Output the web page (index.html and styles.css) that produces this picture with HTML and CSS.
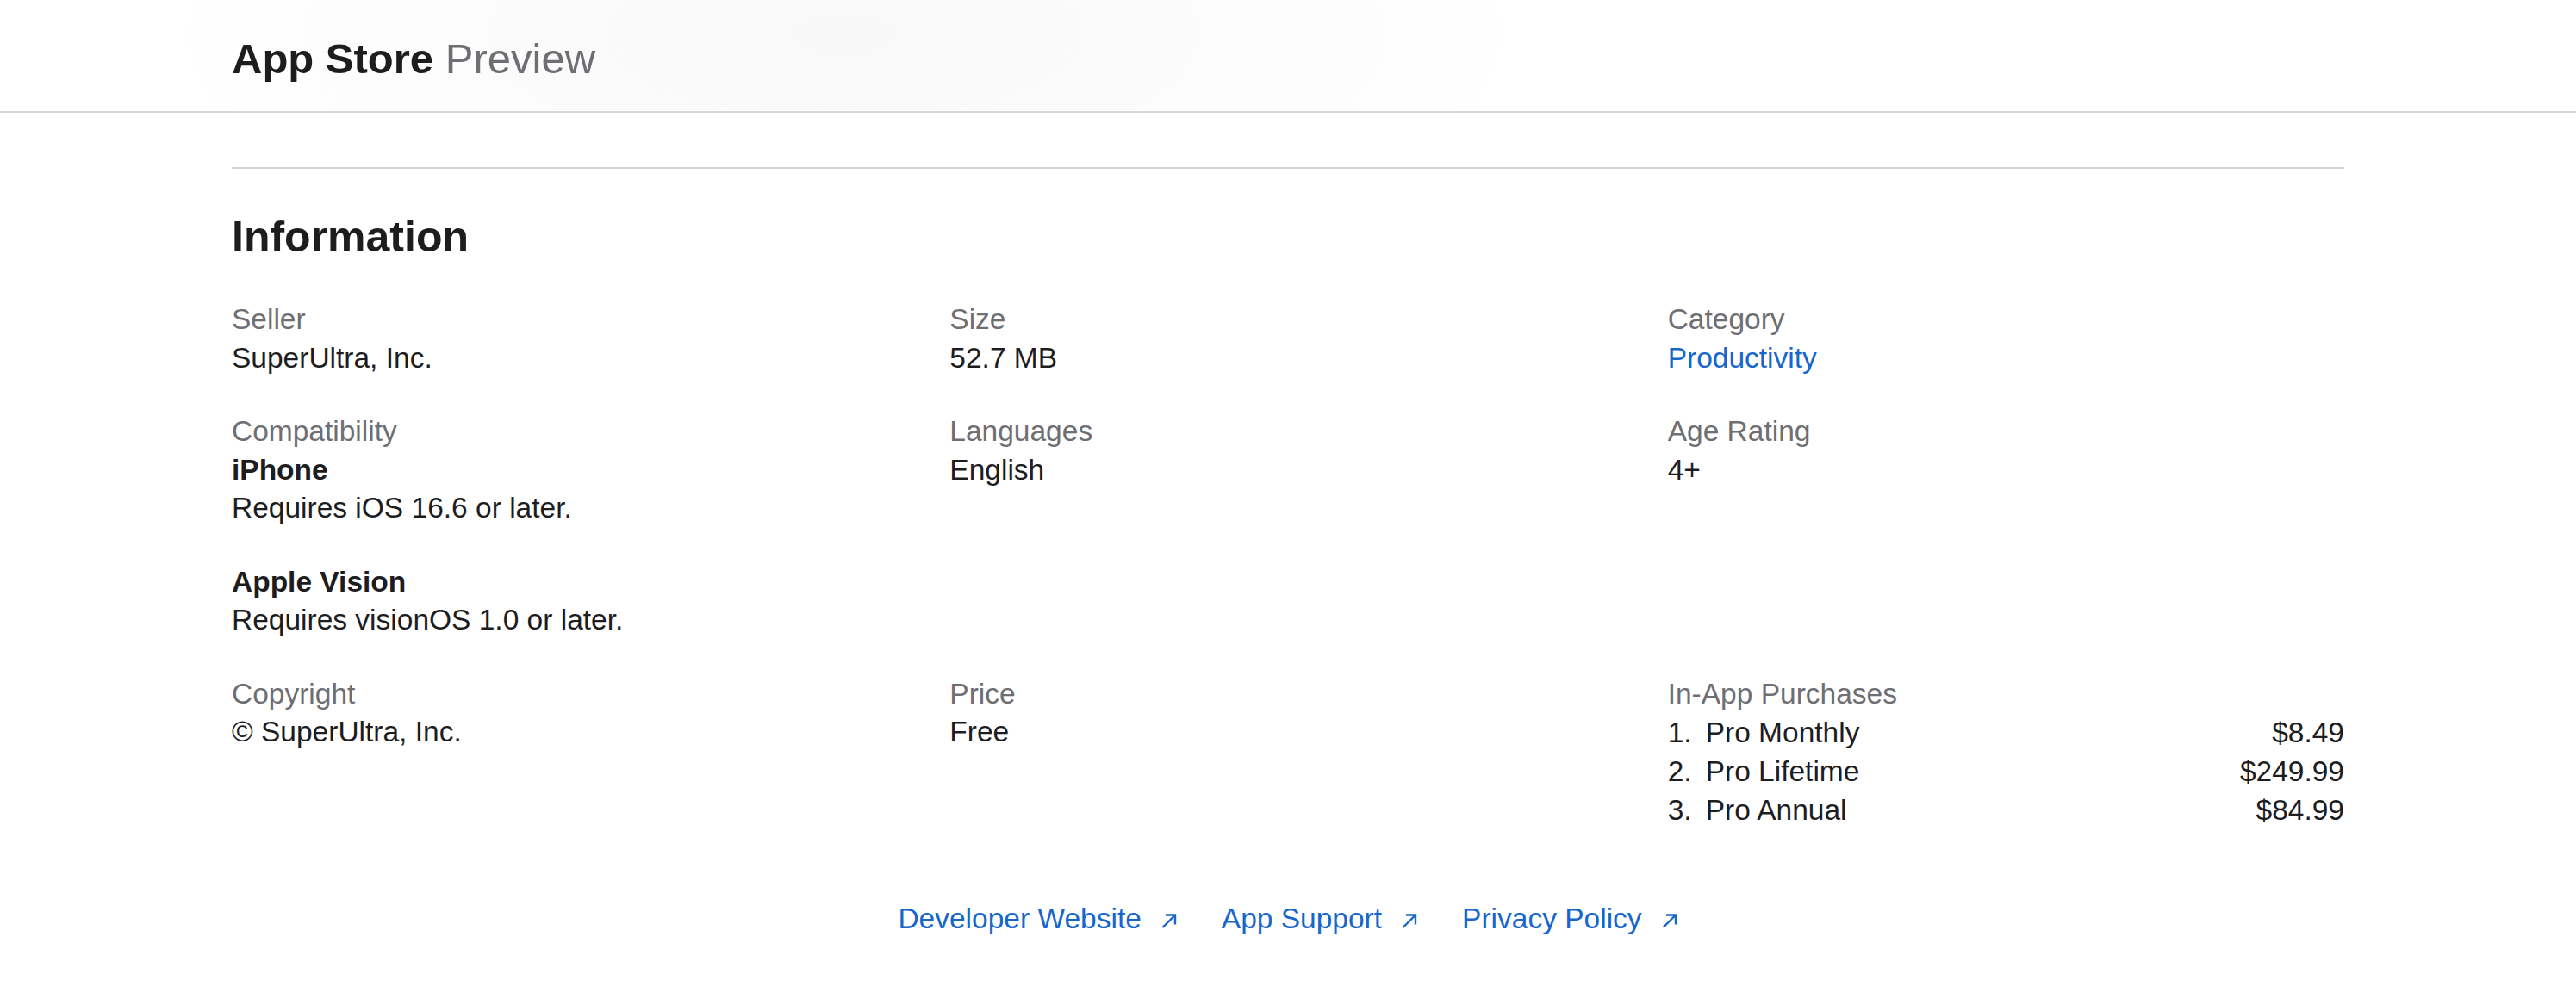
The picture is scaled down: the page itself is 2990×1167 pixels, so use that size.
FILE: index.html
```html
<!DOCTYPE html>
<html lang="en">
<head>
<meta charset="utf-8">
<title>App Store Preview</title>
<link rel="stylesheet" href="styles.css">
</head>
<body>
<header class="localnav">
  <div class="wrap">
    <h1 class="localnav-title"><span class="product">App Store</span> <span class="sub">Preview</span></h1>
  </div>
</header>
<main class="wrap">
  <hr class="divider">
  <section class="information">
    <h2 class="section-title">Information</h2>
    <dl class="info-grid">
      <div class="info-item">
        <dt class="label">Seller</dt>
        <dd class="value">SuperUltra, Inc.</dd>
      </div>
      <div class="info-item">
        <dt class="label">Size</dt>
        <dd class="value">52.7 MB</dd>
      </div>
      <div class="info-item">
        <dt class="label">Category</dt>
        <dd class="value"><a class="link" href="#">Productivity</a></dd>
      </div>
      <div class="info-item">
        <dt class="label">Compatibility</dt>
        <dd class="value">
          <dl class="compat">
            <div class="compat-entry">
              <dt class="device">iPhone</dt>
              <dd>Requires iOS 16.6 or later.</dd>
            </div>
            <div class="compat-entry">
              <dt class="device">Apple Vision</dt>
              <dd>Requires visionOS 1.0 or later.</dd>
            </div>
          </dl>
        </dd>
      </div>
      <div class="info-item">
        <dt class="label">Languages</dt>
        <dd class="value">English</dd>
      </div>
      <div class="info-item">
        <dt class="label">Age Rating</dt>
        <dd class="value">4+</dd>
      </div>
      <div class="info-item">
        <dt class="label">Copyright</dt>
        <dd class="value">© SuperUltra, Inc.</dd>
      </div>
      <div class="info-item">
        <dt class="label">Price</dt>
        <dd class="value">Free</dd>
      </div>
      <div class="info-item">
        <dt class="label">In-App Purchases</dt>
        <dd class="value">
          <ol class="iap">
            <li class="iap-row"><span class="iap-num">1.</span><span class="iap-name">Pro Monthly</span><span class="iap-price">$8.49</span></li>
            <li class="iap-row"><span class="iap-num">2.</span><span class="iap-name">Pro Lifetime</span><span class="iap-price">$249.99</span></li>
            <li class="iap-row"><span class="iap-num">3.</span><span class="iap-name">Pro Annual</span><span class="iap-price">$84.99</span></li>
          </ol>
        </dd>
      </div>
    </dl>
    <ul class="app-links">
      <li><a class="link ext" href="#">Developer Website<svg class="arrow" viewBox="0 0 20 20" width="20" height="20" aria-hidden="true"><path d="M2.5 18 L16.5 4 M6 3.5 H17 V14.5" fill="none" stroke="currentColor" stroke-width="2.4"/></svg></a></li>
      <li><a class="link ext" href="#">App Support<svg class="arrow" viewBox="0 0 20 20" width="20" height="20" aria-hidden="true"><path d="M2.5 18 L16.5 4 M6 3.5 H17 V14.5" fill="none" stroke="currentColor" stroke-width="2.4"/></svg></a></li>
      <li><a class="link ext" href="#">Privacy Policy<svg class="arrow" viewBox="0 0 20 20" width="20" height="20" aria-hidden="true"><path d="M2.5 18 L16.5 4 M6 3.5 H17 V14.5" fill="none" stroke="currentColor" stroke-width="2.4"/></svg></a></li>
    </ul>
  </section>
</main>
</body>
</html>
```

FILE: styles.css
```css
* {
  box-sizing: border-box;
}

html, body {
  margin: 0;
  padding: 0;
  background: #ffffff;
}

body {
  font-family: "Liberation Sans", Arial, sans-serif;
  font-size: 33.5px;
  line-height: 44.5px;
  color: #1d1d1f;
}

.wrap {
  width: 2452px;
  margin: 0 auto;
}

/* header */
.localnav {
  height: 131px;
  border-bottom: 2px solid #d8d8da;
  background:
    radial-gradient(ellipse 820px 300px at 980px 40px, rgba(0, 0, 0, 0.028), rgba(0, 0, 0, 0) 100%),
    #ffffff;
}

.localnav-title {
  margin: 0;
  padding-top: 40px;
  font-size: 49px;
  line-height: 56px;
  font-weight: 400;
  letter-spacing: 0;
  white-space: nowrap;
}

.product {
  font-weight: 700;
  color: #1d1d1f;
}

.sub {
  font-weight: 400;
  color: #6e6e73;
}

/* content */
.divider {
  margin: 63px 0 0;
  border: 0;
  height: 2px;
  background: #d2d2d7;
}

.section-title {
  margin: 49px 0 0;
  font-size: 50px;
  line-height: 60px;
  font-weight: 700;
  color: #1d1d1f;
}

.info-grid {
  margin: 44px 0 0;
  display: grid;
  grid-template-columns: repeat(3, 1fr);
  column-gap: 48px;
  row-gap: 41px;
}

.info-item {
  min-width: 0;
}

.label {
  color: #6e6e73;
}

.value {
  margin: 0;
  color: #1d1d1f;
}

.link {
  color: #1766cc;
  text-decoration: none;
}

.compat {
  margin: 0;
  display: flex;
  flex-direction: column;
  gap: 41px;
}

.compat dd {
  margin: 0;
}

.device {
  font-weight: 700;
}

.iap {
  list-style: none;
  margin: 0;
  padding: 0;
}

.iap-row {
  display: grid;
  grid-template-columns: 44px 1fr auto;
  line-height: 45px;
}

.iap-price {
  text-align: right;
}

/* external links */
.app-links {
  list-style: none;
  margin: 82px 0 0;
  padding: 0;
  display: flex;
  justify-content: center;
  gap: 51px;
}

.ext {
  white-space: nowrap;
}

.arrow {
  margin-left: 22px;
  vertical-align: -1px;
}
```
